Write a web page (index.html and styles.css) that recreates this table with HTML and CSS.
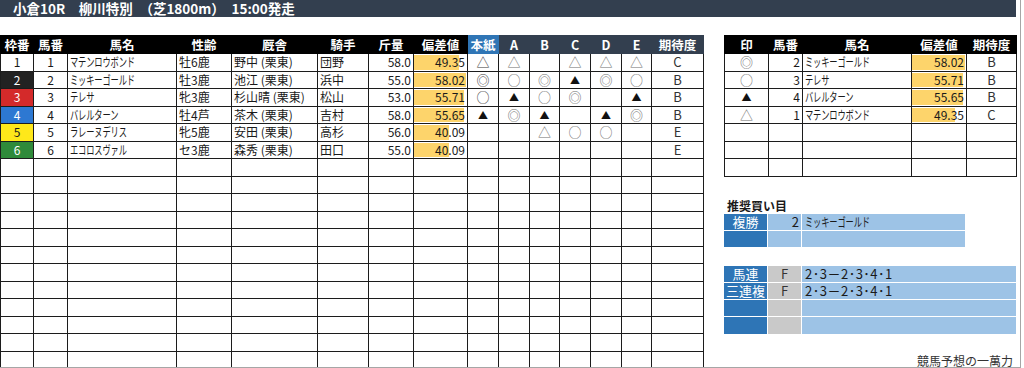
FILE: index.html
```html
<!DOCTYPE html>
<html lang="ja">
<head>
<meta charset="utf-8">
<link rel="stylesheet" href="styles.css">
</head>
<body>
<div class="page">
  <div class="titlebar">小倉10R　柳川特別　（芝1800m）　15:00発走</div>
  <div class="content">
    <table class="main">
      <colgroup>
        <col style="width:33px"><col style="width:34px"><col style="width:109px"><col style="width:55px"><col style="width:86px"><col style="width:51px"><col style="width:45px"><col style="width:54px"><col style="width:31px"><col style="width:31px"><col style="width:30px"><col style="width:31px"><col style="width:31px"><col style="width:30px"><col style="width:52px">
      </colgroup>
      <thead>
        <tr>
          <th>枠番</th><th>馬番</th><th>馬名</th><th>性齢</th><th>厩舎</th><th>騎手</th><th>斤量</th><th>偏差値</th>
          <th class="h-blue">本紙</th><th class="h-slate">A</th><th class="h-slate">B</th><th class="h-slate">C</th><th class="h-slate">D</th><th class="h-slate">E</th><th class="h-slate">期待度</th>
        </tr>
      </thead>
      <tbody>
        <tr><td class="c w1">1</td><td class="c">1</td><td class="l"><span class="kana">マテンロウボンド</span></td><td class="l">牡6鹿</td><td class="l">野中 (栗東)</td><td class="l">団野</td><td class="r">58.0</td><td class="r bar" style="--w:45px">49.35</td><td class="m main-m">△</td><td class="m">△</td><td class="m"></td><td class="m">△</td><td class="m">△</td><td class="m">△</td><td class="k">C</td></tr>
        <tr><td class="c w2">2</td><td class="c">2</td><td class="l"><span class="kana">ミッキーゴールド</span></td><td class="l">牡3鹿</td><td class="l">池江 (栗東)</td><td class="l">浜中</td><td class="r">55.0</td><td class="r bar" style="--w:52px">58.02</td><td class="m main-m">◎</td><td class="m">○</td><td class="m">◎</td><td class="m s">▲</td><td class="m">◎</td><td class="m">○</td><td class="k">B</td></tr>
        <tr><td class="c w3">3</td><td class="c">3</td><td class="l"><span class="kana">テレサ</span></td><td class="l">牝3鹿</td><td class="l">杉山晴 (栗東)</td><td class="l">松山</td><td class="r">53.0</td><td class="r bar" style="--w:50px">55.71</td><td class="m main-m">○</td><td class="m s">▲</td><td class="m">○</td><td class="m">◎</td><td class="m"></td><td class="m s">▲</td><td class="k">B</td></tr>
        <tr><td class="c w4">4</td><td class="c">4</td><td class="l"><span class="kana">バレルターン</span></td><td class="l">牡4芦</td><td class="l">茶木 (栗東)</td><td class="l">吉村</td><td class="r">58.0</td><td class="r bar" style="--w:50px">55.65</td><td class="m main-m s">▲</td><td class="m">◎</td><td class="m s">▲</td><td class="m"></td><td class="m s">▲</td><td class="m">◎</td><td class="k">B</td></tr>
        <tr><td class="c w5">5</td><td class="c">5</td><td class="l"><span class="kana">ラレーヌデリス</span></td><td class="l">牝5鹿</td><td class="l">安田 (栗東)</td><td class="l">高杉</td><td class="r">56.0</td><td class="r bar" style="--w:35px">40.09</td><td class="m main-m"></td><td class="m"></td><td class="m">△</td><td class="m">○</td><td class="m">○</td><td class="m"></td><td class="k">E</td></tr>
        <tr><td class="c w6">6</td><td class="c">6</td><td class="l"><span class="kana">エコロスヴァル</span></td><td class="l">セ3鹿</td><td class="l">森秀 (栗東)</td><td class="l">田口</td><td class="r">55.0</td><td class="r bar" style="--w:35px">40.09</td><td class="m main-m"></td><td class="m"></td><td class="m"></td><td class="m"></td><td class="m"></td><td class="m"></td><td class="k">E</td></tr>
        <tr class="empty"><td></td><td></td><td></td><td></td><td></td><td></td><td></td><td></td><td></td><td></td><td></td><td></td><td></td><td></td><td></td></tr>
        <tr class="empty"><td></td><td></td><td></td><td></td><td></td><td></td><td></td><td></td><td></td><td></td><td></td><td></td><td></td><td></td><td></td></tr>
        <tr class="empty"><td></td><td></td><td></td><td></td><td></td><td></td><td></td><td></td><td></td><td></td><td></td><td></td><td></td><td></td><td></td></tr>
        <tr class="empty"><td></td><td></td><td></td><td></td><td></td><td></td><td></td><td></td><td></td><td></td><td></td><td></td><td></td><td></td><td></td></tr>
        <tr class="empty"><td></td><td></td><td></td><td></td><td></td><td></td><td></td><td></td><td></td><td></td><td></td><td></td><td></td><td></td><td></td></tr>
        <tr class="empty"><td></td><td></td><td></td><td></td><td></td><td></td><td></td><td></td><td></td><td></td><td></td><td></td><td></td><td></td><td></td></tr>
        <tr class="empty"><td></td><td></td><td></td><td></td><td></td><td></td><td></td><td></td><td></td><td></td><td></td><td></td><td></td><td></td><td></td></tr>
        <tr class="empty"><td></td><td></td><td></td><td></td><td></td><td></td><td></td><td></td><td></td><td></td><td></td><td></td><td></td><td></td><td></td></tr>
        <tr class="empty"><td></td><td></td><td></td><td></td><td></td><td></td><td></td><td></td><td></td><td></td><td></td><td></td><td></td><td></td><td></td></tr>
        <tr class="empty"><td></td><td></td><td></td><td></td><td></td><td></td><td></td><td></td><td></td><td></td><td></td><td></td><td></td><td></td><td></td></tr>
        <tr class="empty"><td></td><td></td><td></td><td></td><td></td><td></td><td></td><td></td><td></td><td></td><td></td><td></td><td></td><td></td><td></td></tr>
        <tr class="empty"><td></td><td></td><td></td><td></td><td></td><td></td><td></td><td></td><td></td><td></td><td></td><td></td><td></td><td></td><td></td></tr>
      </tbody>
    </table>

    <div class="side">
      <table class="pick">
        <colgroup>
          <col style="width:44px"><col style="width:34px"><col style="width:109px"><col style="width:55px"><col style="width:50px">
        </colgroup>
        <thead>
          <tr><th>印</th><th>馬番</th><th>馬名</th><th>偏差値</th><th>期待度</th></tr>
        </thead>
        <tbody>
          <tr><td class="m">◎</td><td class="r">2</td><td class="l"><span class="kana">ミッキーゴールド</span></td><td class="r bar" style="--w:53px">58.02</td><td class="k">B</td></tr>
          <tr><td class="m">○</td><td class="r">3</td><td class="l"><span class="kana">テレサ</span></td><td class="r bar" style="--w:51px">55.71</td><td class="k">B</td></tr>
          <tr><td class="m s">▲</td><td class="r">4</td><td class="l"><span class="kana">バレルターン</span></td><td class="r bar" style="--w:51px">55.65</td><td class="k">B</td></tr>
          <tr><td class="m">△</td><td class="r">1</td><td class="l"><span class="kana">マテンロウボンド</span></td><td class="r bar" style="--w:43px">49.35</td><td class="k">C</td></tr>
          <tr class="empty"><td></td><td></td><td></td><td></td><td></td></tr>
          <tr class="empty"><td></td><td></td><td></td><td></td><td></td></tr>
          <tr class="empty"><td></td><td></td><td></td><td></td><td></td></tr>
        </tbody>
      </table>

      <div class="rec-title">推奨買い目</div>

      <div class="bets bets-win">
        <div class="lbl">複勝</div><div class="num">2</div><div class="val"><span class="kana">ミッキーゴールド</span></div>
        <div class="lbl"></div><div class="num"></div><div class="val"></div>
      </div>

      <div class="bets bets-combo">
        <div class="lbl">馬連</div><div class="typ">F</div><div class="val">2･3－2･3･4･1</div>
        <div class="lbl">三連複</div><div class="typ">F</div><div class="val">2･3－2･3･4･1</div>
        <div class="lbl"></div><div class="typ"></div><div class="val"></div>
        <div class="lbl"></div><div class="typ"></div><div class="val"></div>
      </div>

      <div class="credit">競馬予想の一萬力</div>
    </div>
  </div>
</div>
</body>
</html>
```

FILE: styles.css
```css
html, body {
  margin: 0;
  padding: 0;
  background: #ffffff;
}

body {
  font-family: "Noto Sans CJK JP", "Noto Sans", sans-serif;
  color: #1a1a1a;
}

.page {
  width: 1020px;
  height: 367px;
  border-right: 1px solid #a6a6a6;
  border-bottom: 1px solid #a6a6a6;
  overflow: hidden;
}

.titlebar {
  width: 1003px;
  height: 17px;
  padding-left: 13px;
  background: #333f4f;
  color: #ffffff;
  font-size: 13.5px;
  line-height: 17px;
  font-weight: 700;
  white-space: nowrap;
}

.content {
  display: flex;
  align-items: flex-start;
  margin-top: 18px;
}

table {
  border-collapse: collapse;
  table-layout: fixed;
  font-size: 12px;
}

table.main {
  width: 704px;
}

th {
  background: #000000;
  color: #ffffff;
  font-weight: 700;
  font-size: 12.5px;
  height: 17px;
  line-height: 15px;
  padding: 0;
  border: 1px solid #000000;
  text-align: center;
  white-space: nowrap;
}

th.h-blue {
  background: #2f75b5;
  border-color: #2f75b5;
}

th.h-slate {
  background: #333f4f;
  border-color: #333f4f;
}

td {
  height: 16.5px;
  padding: 0 2px;
  border: 1px solid #1c1c1c;
  line-height: 16px;
  white-space: nowrap;
}

td.c { text-align: center; }
td.l { text-align: left; overflow: hidden; }
td.r { text-align: right; }

.kana {
  display: inline-block;
  transform: scaleX(0.66);
  transform-origin: left center;
  font-size: 12.5px;
  letter-spacing: -0.2px;
}

td.m {
  text-align: center;
  color: #707070;
  font-size: 13px;
}
td.m.main-m { color: #3a3a3a; }
td.m.s { color: #111111; font-size: 10px; }
td.k {
  text-align: center;
  font-size: 13px;
  color: #333333;
}

td.bar {
  background-image: linear-gradient(to right, #fdd46b var(--w), transparent var(--w));
  background-repeat: no-repeat;
  background-size: 100% calc(100% - 2px);
  background-position: 0 1px;
}

td.w1 { background: #ffffff; }
td.w2 { background: #222222; color: #ffffff; }
td.w3 { background: #d42a2a; color: #ffffff; }
td.w4 { background: #2d78d2; color: #ffffff; }
td.w5 { background: #ffe81a; color: #1a1a1a; }
td.w6 { background: #2f8a3a; color: #ffffff; }

.side {
  display: flex;
  flex-direction: column;
  margin-left: 20px;
  width: 293px;
}

table.pick {
  width: 293px;
}

.rec-title {
  margin-top: 21px;
  padding-left: 3px;
  font-size: 12px;
  font-weight: 700;
  line-height: 15px;
  color: #1a1a1a;
}

.bets {
  display: grid;
  column-gap: 1px;
  row-gap: 1px;
  font-size: 12px;
  line-height: 16px;
}

.bets-win {
  margin-top: 1px;
  width: 241px;
  grid-template-columns: 43px 33px 1fr;
  grid-auto-rows: 16px;
}

.bets-combo {
  margin-top: 19px;
  width: 292px;
  grid-template-columns: 43px 33px 1fr;
  grid-auto-rows: 16.25px;
}

.lbl {
  background: #2e75b6;
  color: #ffffff;
  text-align: center;
  font-size: 13px;
  white-space: nowrap;
}

.num {
  background: #9dc3e6;
  text-align: right;
  padding-right: 2px;
  font-size: 13px;
}

.typ {
  background: #c9c9c9;
  text-align: center;
  color: #333333;
  font-size: 13px;
}

.val {
  background: #9dc3e6;
  padding-left: 3px;
  color: #1a1a1a;
  font-size: 13px;
  letter-spacing: 0.5px;
  white-space: nowrap;
}

.credit {
  margin-top: 18px;
  text-align: right;
  padding-right: 4px;
  font-size: 12px;
  color: #333333;
}
```
